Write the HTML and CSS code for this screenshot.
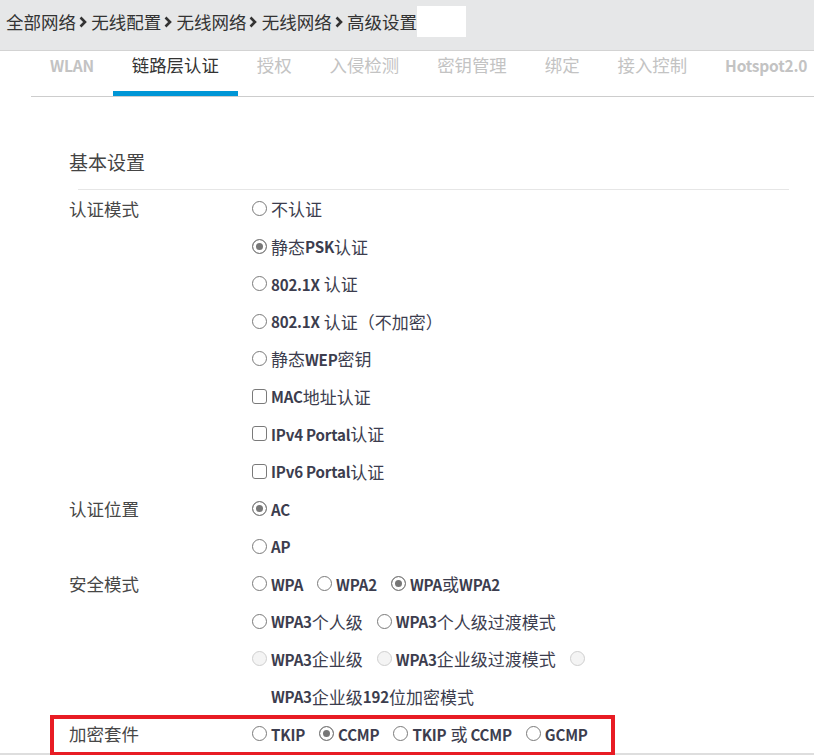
FILE: index.html
```html
<!DOCTYPE html>
<html lang="zh-CN">
<head>
<meta charset="utf-8">
<title>高级设置</title>
<link rel="stylesheet" href="styles.css">
</head>
<body>
<div class="page">
  <div class="crumbs">
    <span class="crumb">全部网络</span>
    <svg class="chev" viewBox="0 0 8 12" width="8" height="12"><path d="M1.5 1.5 L6 6 L1.5 10.5" fill="none" stroke="#333" stroke-width="2.6"/></svg>
    <span class="crumb">无线配置</span>
    <svg class="chev" viewBox="0 0 8 12" width="8" height="12"><path d="M1.5 1.5 L6 6 L1.5 10.5" fill="none" stroke="#333" stroke-width="2.6"/></svg>
    <span class="crumb">无线网络</span>
    <svg class="chev" viewBox="0 0 8 12" width="8" height="12"><path d="M1.5 1.5 L6 6 L1.5 10.5" fill="none" stroke="#333" stroke-width="2.6"/></svg>
    <span class="crumb">无线网络</span>
    <svg class="chev" viewBox="0 0 8 12" width="8" height="12"><path d="M1.5 1.5 L6 6 L1.5 10.5" fill="none" stroke="#333" stroke-width="2.6"/></svg>
    <span class="crumb">高级设置</span>
    <span class="blank"></span>
  </div>

  <div class="tabs">
    <div class="tab"><span class="en">WLAN</span></div>
    <div class="tab active">链路层认证</div>
    <div class="tab">授权</div>
    <div class="tab">入侵检测</div>
    <div class="tab">密钥管理</div>
    <div class="tab">绑定</div>
    <div class="tab">接入控制</div>
    <div class="tab"><span class="en">Hotspot2.0</span></div>
  </div>

  <div class="content">
    <h2 class="section-title">基本设置</h2>
    <div class="section-rule"></div>

    <div class="field">
      <div class="field-label">认证模式</div>
      <div class="options">
        <div class="opt-line"><span class="opt"><span class="radio"></span>不认证</span></div>
        <div class="opt-line"><span class="opt"><span class="radio on"></span>静态<span class="en">PSK</span>认证</span></div>
        <div class="opt-line"><span class="opt"><span class="radio"></span><span class="en">802.1X</span><span class="sp">认证</span></span></div>
        <div class="opt-line"><span class="opt"><span class="radio"></span><span class="en">802.1X</span><span class="sp">认证（不加密）</span></span></div>
        <div class="opt-line"><span class="opt"><span class="radio"></span>静态<span class="en">WEP</span>密钥</span></div>
        <div class="opt-line"><span class="opt"><span class="check"></span><span class="en">MAC</span>地址认证</span></div>
        <div class="opt-line"><span class="opt"><span class="check"></span><span class="en">IPv4 Portal</span>认证</span></div>
        <div class="opt-line"><span class="opt"><span class="check"></span><span class="en">IPv6 Portal</span>认证</span></div>
      </div>
    </div>

    <div class="field">
      <div class="field-label">认证位置</div>
      <div class="options">
        <div class="opt-line"><span class="opt"><span class="radio on"></span><span class="en">AC</span></span></div>
        <div class="opt-line"><span class="opt"><span class="radio"></span><span class="en">AP</span></span></div>
      </div>
    </div>

    <div class="field">
      <div class="field-label">安全模式</div>
      <div class="options">
        <div class="opt-line">
          <span class="opt"><span class="radio"></span><span class="en">WPA</span></span>
          <span class="opt"><span class="radio"></span><span class="en">WPA2</span></span>
          <span class="opt"><span class="radio on"></span><span class="en">WPA</span>或<span class="en">WPA2</span></span>
        </div>
        <div class="opt-line">
          <span class="opt"><span class="radio"></span><span class="en">WPA3</span>个人级</span>
          <span class="opt"><span class="radio"></span><span class="en">WPA3</span>个人级过渡模式</span>
        </div>
        <div class="opt-line">
          <span class="opt"><span class="radio off"></span><span class="en">WPA3</span>企业级</span>
          <span class="opt"><span class="radio off"></span><span class="en">WPA3</span>企业级过渡模式</span>
          <span class="opt"><span class="radio off"></span></span>
        </div>
        <div class="opt-line wrapped"><span class="en">WPA3</span>企业级<span class="en">192</span>位加密模式</div>
      </div>
    </div>

    <div class="field highlight">
      <div class="field-label">加密套件</div>
      <div class="options">
        <div class="opt-line">
          <span class="opt"><span class="radio"></span><span class="en">TKIP</span></span>
          <span class="opt"><span class="radio on"></span><span class="en">CCMP</span></span>
          <span class="opt"><span class="radio"></span><span class="en">TKIP</span><span class="sp both">或</span><span class="en">CCMP</span></span>
          <span class="opt"><span class="radio"></span><span class="en">GCMP</span></span>
        </div>
      </div>
    </div>
  </div>
</div>
</body>
</html>
```

FILE: styles.css
```css
* { box-sizing: border-box; }

html, body {
  margin: 0;
  padding: 0;
  background: #fff;
}

body {
  font-family: "Noto Sans CJK SC", "Noto Sans", sans-serif;
  color: #3c3d4e;
}

.page {
  width: 814px;
}

/* breadcrumb bar */
.crumbs {
  height: 51px;
  background: #e6e7e8;
  border-bottom: 1px solid #d3d3d3;
  display: flex;
  align-items: flex-start;
  padding: 6px 0 0 6px;
}

.crumb {
  font-size: 17.5px;
  line-height: 31px;
  color: #333;
  white-space: nowrap;
}

.chev {
  margin: 10px 4.5px 0 2.75px;
  flex-shrink: 0;
}

.blank {
  display: inline-block;
  width: 49px;
  height: 31px;
  background: #fff;
}

/* tabs */
.tabs {
  margin-left: 31px;
  display: flex;
  border-bottom: 1px solid #cdcdcd;
  overflow: hidden;
}

.tab {
  flex-shrink: 0;
  height: 45px;
  padding: 2px 19px 0;
  font-size: 17.4px;
  line-height: 24px;
  color: #c3c3c3;
  white-space: nowrap;
}

.tab .en {
  font-weight: 700;
  font-size: 15.5px;
  letter-spacing: -0.2px;
}

.tab.active {
  color: #333;
  box-shadow: inset 0 -5px 0 #0096d6;
}

/* content */
.content {
  border-bottom: 2px solid #dedede;
}

.section-title {
  margin: 52px 0 0 69px;
  font-size: 19px;
  line-height: 26px;
  font-weight: 400;
  color: #444;
}

.section-rule {
  margin: 14px 0 0 78px;
  width: 711px;
  height: 1px;
  background: #e6e6e6;
}

.field {
  margin-left: 69px;
  display: grid;
  grid-template-columns: 183px 1fr;
}

.field-label {
  font-size: 17.5px;
  line-height: 38px;
  color: #474747;
}

.options {
  display: flex;
  flex-direction: column;
}

.opt-line {
  height: 37.5px;
  display: flex;
  align-items: center;
  font-size: 17px;
  white-space: nowrap;
}

.opt-line.wrapped {
  padding-left: 19px;
}

.opt {
  display: inline-flex;
  align-items: center;
  margin-right: 14px;
}

.en {
  font-weight: 700;
  font-size: 15.1px;
  letter-spacing: -0.2px;
}

.sp {
  margin-left: 4px;
}

.sp.both {
  margin-right: 3px;
}

.radio {
  display: inline-block;
  width: 15px;
  height: 15px;
  border: 1px solid #7a7a7a;
  border-radius: 50%;
  background: #fff;
  margin-right: 4px;
  flex-shrink: 0;
}

.radio.on {
  background: #777;
  box-shadow: inset 0 0 0 3px #fff;
}

.radio.off {
  border-color: #cfcfcf;
  background: #f4f4f4;
}

.check {
  display: inline-block;
  width: 15px;
  height: 15px;
  border: 1.5px solid #7a7a7a;
  border-radius: 3px;
  background: #fff;
  margin-right: 4px;
  flex-shrink: 0;
}

/* red annotation around the cipher suite row */
.field.highlight {
  position: relative;
}

.field.highlight::after {
  content: "";
  position: absolute;
  left: -19px;
  top: 0;
  width: 557px;
  height: 33px;
  border: 4px solid #e81c24;
  pointer-events: none;
}
```
